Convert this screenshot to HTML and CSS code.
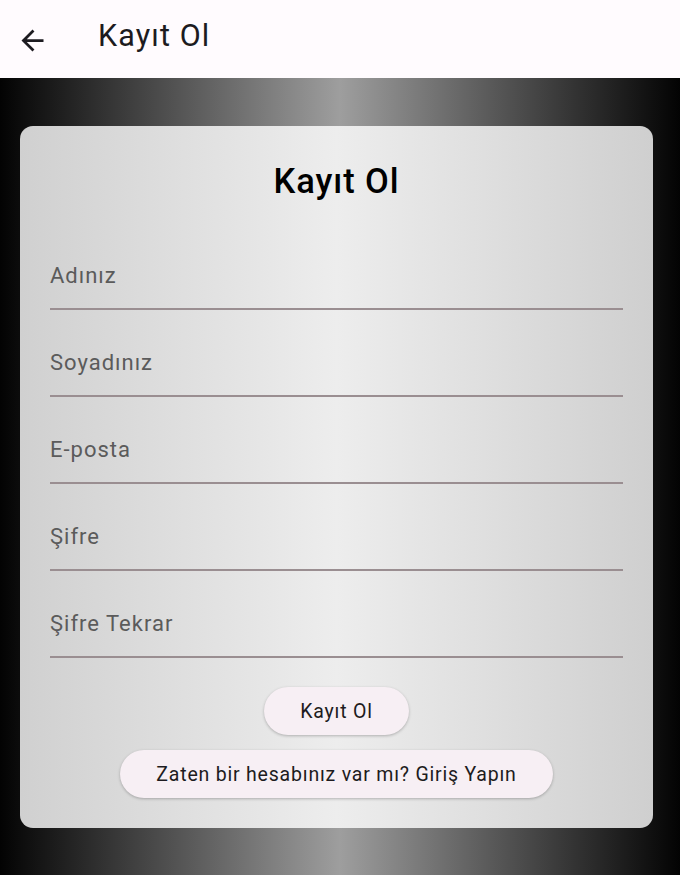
FILE: index.html
```html
<!DOCTYPE html>
<html lang="tr">
<head>
<meta charset="utf-8">
<title>Kayıt Ol</title>
<link rel="stylesheet" href="styles.css">
</head>
<body>
<header class="appbar">
  <button class="back" aria-label="Geri">
    <svg width="33" height="33" viewBox="0 0 24 24"><path d="M20 11H7.83l5.59-5.59L12 4l-8 8 8 8 1.41-1.41L7.83 13H20v-2z" fill="#1d1b20"/></svg>
  </button>
  <h1 class="appbar-title">Kayıt Ol</h1>
</header>
<main class="page">
  <section class="card">
    <h2 class="card-title">Kayıt Ol</h2>
    <form class="form">
      <label class="field"><span class="label">Adınız</span></label>
      <label class="field"><span class="label">Soyadınız</span></label>
      <label class="field"><span class="label">E-posta</span></label>
      <label class="field"><span class="label">Şifre</span></label>
      <label class="field"><span class="label">Şifre Tekrar</span></label>
      <div class="actions">
        <button type="button" class="btn">Kayıt Ol</button>
        <button type="button" class="btn">Zaten bir hesabınız var mı? Giriş Yapın</button>
      </div>
    </form>
  </section>
</main>
</body>
</html>
```
FILE: styles.css
```css
* { box-sizing: border-box; }
html, body { margin: 0; padding: 0; }
body {
  width: 680px;
  height: 875px;
  overflow: hidden;
  font-family: Roboto, "Noto Sans", sans-serif;
  display: flex;
  flex-direction: column;
}
.appbar {
  height: 78px;
  flex: none;
  background: #fffbfe;
  display: flex;
  align-items: center;
  padding-left: 16px;
}
.back {
  border: 0;
  background: none;
  padding: 0;
  width: 33px;
  height: 33px;
  display: flex;
  margin-top: 2px;
}
.appbar-title {
  margin: 0 0 0 49px;
  font-size: 30.5px;
  letter-spacing: 1.1px;
  font-weight: 400;
  color: #1d1b20;
  line-height: 1;
  padding-bottom: 6px;
}
.page {
  flex: 1;
  background: linear-gradient(90deg, #030303 0%, #9e9e9e 50%, #030303 100%);
  padding: 48px 27px 0 20px;
}
.card {
  height: 702px;
  border-radius: 13px;
  background: linear-gradient(90deg, #d0d0d0 0%, #ededed 50%, #cfcfcf 100%);
  padding: 29px 30px 0 30px;
  display: flex;
  flex-direction: column;
}
.card-title {
  margin: 0;
  text-align: center;
  font-size: 34.5px;
  letter-spacing: 0.9px;
  font-weight: 500;
  color: #000;
  line-height: 52px;
  height: 52px;
}
.form {
  display: flex;
  flex-direction: column;
  margin-top: 16px;
}
.field {
  height: 87px;
  display: flex;
  align-items: flex-end;
  border-bottom: 2px solid #9a8e91;
  padding-bottom: 19px;
}
.label {
  font-size: 22px;
  letter-spacing: 1px;
  color: #5b5b5b;
  line-height: 26px;
}
.actions {
  display: flex;
  flex-direction: column;
  align-items: center;
  gap: 15px;
  margin-top: 29px;
}
.btn {
  height: 48px;
  border: 0;
  border-radius: 24px;
  background: #f7eff4;
  color: #1d1b20;
  font-family: Roboto, "Noto Sans", sans-serif;
  font-size: 19.5px;
  letter-spacing: 0.8px;
  padding: 0 36px;
  box-shadow: 0 1px 3px rgba(0,0,0,0.25);
}
```
